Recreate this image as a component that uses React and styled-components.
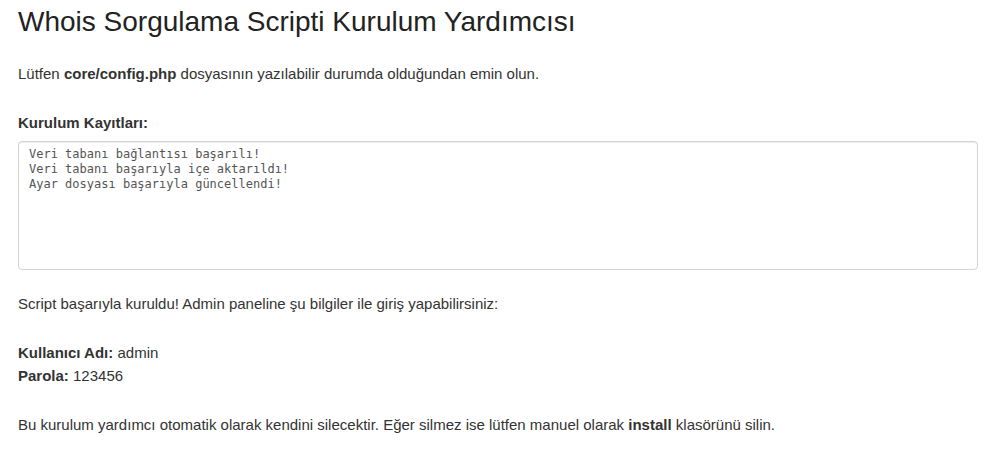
import React from "react";
import styled, { createGlobalStyle } from "styled-components";

const Global = createGlobalStyle`
  html, body { margin: 0; padding: 0; background: #fff; }
  body {
    font-family: "Liberation Sans", Arial, Helvetica, sans-serif;
    font-size: 15px;
    line-height: 21px;
    color: #333;
  }
`;

const Page = styled.div`
  padding: 0 14px 0 18px;
`;

const Title = styled.h1`
  margin: 6px 0 0;
  font-size: 28px;
  font-weight: 400;
  line-height: 31px;
  color: #222;
`;

const Para = styled.p`
  margin: ${(p) => p.$mt || 0}px 0 0;
`;

const Label = styled.div`
  margin-top: 28px;
  font-weight: 700;
`;

const LogBox = styled.textarea`
  display: block;
  box-sizing: border-box;
  width: 100%;
  height: 129px;
  margin: 8px 0 0;
  padding: 5px 10px;
  border: 1px solid #d4d4d4;
  border-radius: 4px;
  box-shadow: inset 0 1px 1px rgba(0, 0, 0, 0.075);
  font-family: "DejaVu Sans Mono", monospace;
  font-size: 12px;
  line-height: 15px;
  color: #555;
  background: #fff;
  resize: none;
  outline: none;
`;

const Info = styled.div`
  margin-top: ${(p) => p.$mt || 0}px;
  line-height: 23px;
`;

export default function App() {
  const log =
    "Veri tabanı bağlantısı başarılı!\nVeri tabanı başarıyla içe aktarıldı!\nAyar dosyası başarıyla güncellendi!";
  return (
    <Page>
      <Global />
      <Title>Whois Sorgulama Scripti Kurulum Yardımcısı</Title>
      <Para $mt={26}>
        Lütfen <b>core/config.php</b> dosyasının yazılabilir durumda olduğundan emin olun.
      </Para>
      <Label>Kurulum Kayıtları:</Label>
      <LogBox readOnly value={log} />
      <Para $mt={23}>
        Script başarıyla kuruldu! Admin paneline şu bilgiler ile giriş yapabilirsiniz:
      </Para>
      <Info $mt={27}>
        <b>Kullanıcı Adı:</b> admin
        <br />
        <b>Parola:</b> 123456
      </Info>
      <Para $mt={27}>
        Bu kurulum yardımcı otomatik olarak kendini silecektir. Eğer silmez ise lütfen manuel olarak{" "}
        <b>install</b> klasörünü silin.
      </Para>
    </Page>
  );
}
